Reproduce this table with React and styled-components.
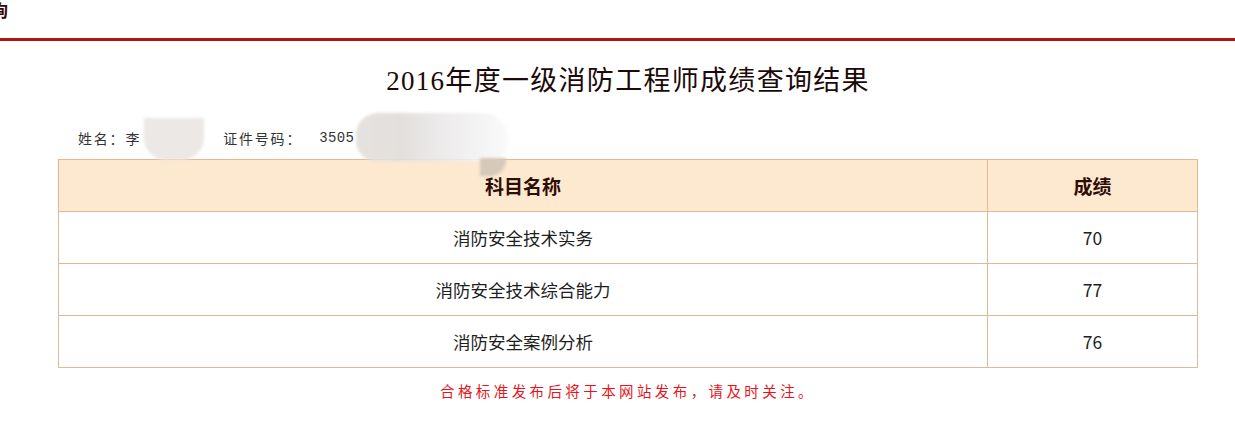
import React from "react";
import styled, { createGlobalStyle } from "styled-components";

const Global = createGlobalStyle`
  html, body { margin: 0; padding: 0; background: #fff; }
  body { font-family: "Liberation Serif", "Noto Sans CJK SC", serif; overflow: hidden; }
`;

const TopBar = styled.header`
  height: 38px;
  border-bottom: 3px solid #b01414;
  overflow: hidden;
`;

const NavTail = styled.span`
  display: inline-block;
  margin-left: -9px;
  font-family: "Noto Sans CJK SC", sans-serif;
  font-size: 17px;
  line-height: 20px;
  font-weight: 700;
  color: #3a0606;
`;

const Content = styled.main`
  position: relative;
  width: 1140px;
  margin-left: 58px;
  display: flex;
  flex-direction: column;
`;

const Title = styled.h1`
  margin: 20px 0 0;
  text-align: center;
  font-family: "Liberation Serif", "Noto Sans CJK SC", serif;
  font-weight: 400;
  font-size: 27px;
  line-height: 40px;
  letter-spacing: 1.3px;
  color: #1c0a0a;
`;

const Info = styled.div`
  margin: 27px 0 0 20px;
  display: flex;
  gap: 82px;
  font-family: "Noto Sans CJK SC", sans-serif;
  font-size: 14px;
  line-height: 20px;
  letter-spacing: 1.8px;
  color: #333;
`;

const Field = styled.span`
  display: inline-flex;
`;

const Digits = styled.span`
  margin-left: 17px;
  font-family: "Liberation Mono", monospace;
  font-size: 14px;
  letter-spacing: 0.4px;
`;

const Blur = styled.div`
  position: absolute;
  left: ${(p) => p.$x}px;
  top: ${(p) => p.$y}px;
  width: ${(p) => p.$w}px;
  height: ${(p) => p.$h}px;
  border-radius: ${(p) => p.$r};
  background: ${(p) => p.$bg};
  filter: blur(1.5px);
`;

const Table = styled.table`
  margin-top: 11px;
  width: 1140px;
  border-collapse: collapse;
  table-layout: fixed;
  font-family: "Noto Sans CJK SC", sans-serif;
`;

const HeadCell = styled.th`
  height: 51px;
  padding: 0;
  background: #fde8d0;
  border: 1px solid #e3b894;
  font-size: 19px;
  font-weight: 700;
  color: #2e0d05;
  text-align: center;
  width: ${(p) => p.$w || "auto"};
`;

const Cell = styled.td`
  height: 51px;
  padding: 0;
  border: 1px solid #e3b894;
  font-size: 17.5px;
  color: #1e1e1e;
  text-align: center;
`;

const Note = styled.p`
  margin: 12px 0 0;
  text-align: center;
  font-family: "Noto Sans CJK SC", sans-serif;
  font-size: 14.5px;
  line-height: 22px;
  letter-spacing: 3.4px;
  color: #e8141c;
`;

const rows = [
  ["消防安全技术实务", "70"],
  ["消防安全技术综合能力", "77"],
  ["消防安全案例分析", "76"],
];

export default function App() {
  return (
    <>
      <Global />
      <TopBar>
        <NavTail>询</NavTail>
      </TopBar>
      <Content>
        <Title>2016年度一级消防工程师成绩查询结果</Title>
        <Info>
          <Field>姓名：李</Field>
          <Field>
            证件号码：<Digits>3505</Digits>
          </Field>
        </Info>
        <Blur $x={86} $y={77} $w={60} $h={42} $r="0 0 22px 22px" $bg="#ebe8e6" />
        <Blur $x={298} $y={72} $w={152} $h={48} $r="22px 26px 18px 20px" $bg="linear-gradient(90deg,#e4e1df 0%,#e2dfdd 30%,#eceaea 55%,#f4f3f3 80%,#fafafa 100%)" />
        <Blur $x={422} $y={117} $w={26} $h={18} $r="0 0 16px 0" $bg="#d6c8bb" />
        <Table>
          <thead>
            <tr>
              <HeadCell $w="928px">科目名称</HeadCell>
              <HeadCell>成绩</HeadCell>
            </tr>
          </thead>
          <tbody>
            {rows.map(([name, score]) => (
              <tr key={name}>
                <Cell>{name}</Cell>
                <Cell>{score}</Cell>
              </tr>
            ))}
          </tbody>
        </Table>
        <Note>合格标准发布后将于本网站发布，请及时关注。</Note>
      </Content>
    </>
  );
}
